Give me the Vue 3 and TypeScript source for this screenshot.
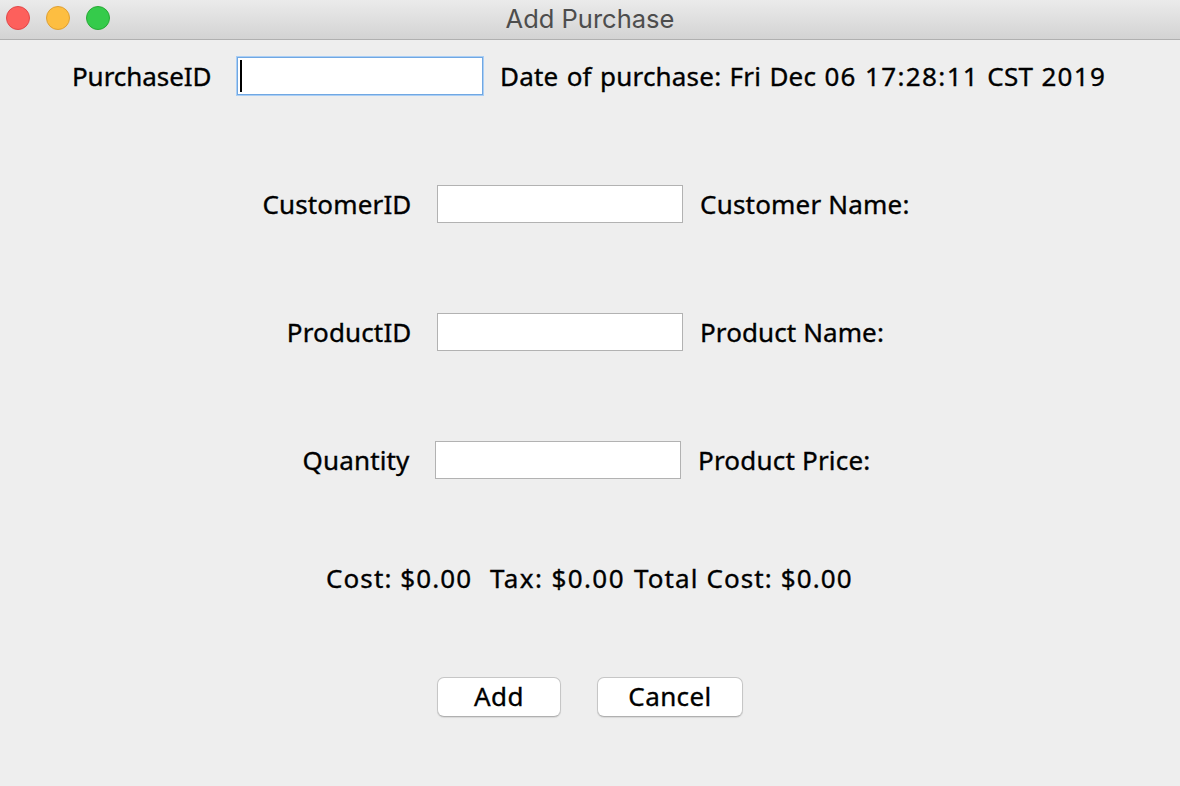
<script setup lang="ts">
import { ref } from 'vue'

interface FieldRow {
  key: string
  label: string
  info: string
}

const dateParts = ['Fri', 'Dec', '06', '17:28:11', 'CST', '2019']
const rows: FieldRow[] = [
  { key: 'purchase', label: 'PurchaseID', info: 'Date of purchase:' },
  { key: 'customer', label: 'CustomerID', info: 'Customer Name:' },
  { key: 'product', label: 'ProductID', info: 'Product Name:' },
  { key: 'quantity', label: 'Quantity', info: 'Product Price:' },
]
const values = ref<Record<string, string>>({ purchase: '', customer: '', product: '', quantity: '' })
const isNumeric = (part: string): boolean => /^\d/.test(part)
</script>

<template>
  <div class="window">
    <header class="titlebar">
      <div class="controls">
        <span class="light close"></span>
        <span class="light minimize"></span>
        <span class="light zoom"></span>
      </div>
      <h1 class="title">Add Purchase</h1>
    </header>
    <main class="form">
      <div v-for="row in rows" :key="row.key" class="row" :class="row.key">
        <label class="label" :for="row.key">{{ row.label }}</label>
        <div class="field">
          <input :id="row.key" v-model="values[row.key]" type="text" />
          <i v-if="row.key === 'purchase'" class="caret"></i>
        </div>
        <span class="info">{{ row.info }}<template v-if="row.key === 'purchase'"><template v-for="part in dateParts" :key="part">{{ ' ' }}<span :class="{ numeric: isNumeric(part) }">{{ part }}</span></template></template></span>
      </div>
      <div class="totals">
        <span class="cost">Cost: $0.00</span>
        <span class="tax">Tax: $0.00</span>
        <span class="total">Total Cost: $0.00</span>
      </div>
      <div class="actions">
        <button class="add" type="button">Add</button>
        <button class="cancel" type="button">Cancel</button>
      </div>
    </main>
  </div>
</template>

<style>
body { margin: 0; overflow: hidden; background: #eeeeee; }
</style>

<style scoped>
.window {
  width: 1180px;
  height: 786px;
  background: #eeeeee;
  color: #000;
  font: 400 26px/36px "Noto Sans", "Open Sans", sans-serif;
  white-space: nowrap;
  overflow: hidden;
}
.form { -webkit-text-stroke: 0.35px #000; }
.titlebar {
  box-sizing: border-box;
  height: 40px;
  display: grid;
  grid-template-columns: 110px 1fr 110px;
  background: linear-gradient(#ebebeb, #d3d3d3);
  border-bottom: 1px solid #b0b0b0;
}
.controls { display: flex; gap: 16px; padding: 6px 0 0 6px; }
.light { box-sizing: border-box; width: 24px; height: 24px; border-radius: 50%; flex: none; }
.close { background: #fd605c; border: 1px solid #e2484a; }
.minimize { background: #fdbe41; border: 1px solid #dfa034; }
.zoom { background: #35cb4b; border: 1px solid #27aa35; }
.title {
  margin: 0;
  text-align: center;
  color: #4d4d4d;
  font: 400 25.5px/38px Inter, Roboto, sans-serif;
}
.form { display: flex; flex-direction: column; }
.row { display: flex; height: 40px; margin-bottom: 88px; align-items: center; }
.row.purchase { margin-top: 16px; }
.row.quantity { margin-bottom: 80px; }
.label { flex: none; text-align: right; width: 411.5px; margin-right: 25.5px; letter-spacing: 0.15px; }
.purchase .label { width: 211.5px; letter-spacing: -0.05px; }
.quantity .label { width: 409.5px; }
.info { letter-spacing: 0.2px; }
.purchase .info { word-spacing: 1.3px; }
.info .numeric { letter-spacing: 1.35px; }
.product .info { letter-spacing: 0.1px; }
.field { position: relative; flex: none; width: 246px; height: 38px; margin-right: 17px; }
.field input {
  box-sizing: border-box;
  display: block;
  width: 100%;
  height: 100%;
  margin: 0;
  padding: 0 5px;
  border: 1px solid #b2b2b2;
  border-radius: 0;
  background: #fff;
  font: inherit;
  outline: none;
}
.purchase .field input { border-color: #70a7e2; box-shadow: 0 0 0 1px #a9cef5; }
.caret { position: absolute; left: 3px; top: 3px; width: 2px; height: 32px; background: #000; }
.totals { display: flex; height: 36px; padding-left: 326px; letter-spacing: 1.1px; }
.cost { width: 164px; }
.tax { width: 144px; letter-spacing: 1.4px; }
.actions { display: flex; gap: 36px; padding: 81px 0 0 437px; }
.actions button {
  box-sizing: border-box;
  height: 40px;
  padding: 0 0 2px;
  border: 1px solid #c6c6c6;
  border-bottom-color: #b0b0b0;
  border-radius: 7px;
  background: #fff;
  color: #000;
  font: inherit;
  letter-spacing: 0.4px;
  box-shadow: 0 1px 1px #00000018;
}
.add { width: 124px; }
.cancel { width: 146px; }
</style>
